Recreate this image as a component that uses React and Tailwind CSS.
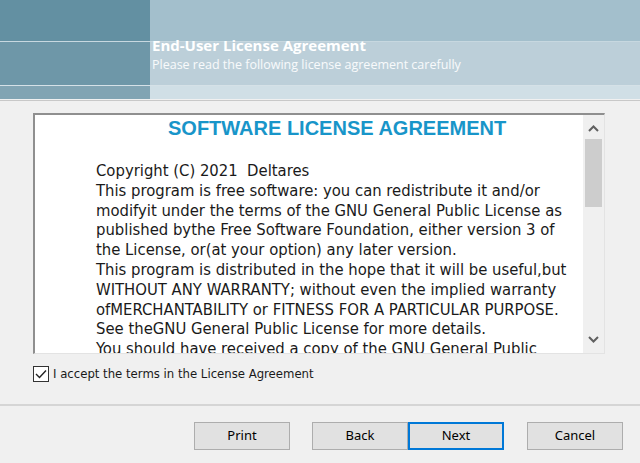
import React from 'react';

const licenseLines = [
  'Copyright (C) 2021  Deltares',
  'This program is free software: you can redistribute it and/or',
  'modifyit under the terms of the GNU General Public License as',
  'published bythe Free Software Foundation, either version 3 of',
  'the License, or(at your option) any later version.',
  'This program is distributed in the hope that it will be useful,but',
  'WITHOUT ANY WARRANTY; without even the implied warranty',
  'ofMERCHANTABILITY or FITNESS FOR A PARTICULAR PURPOSE.',
  'See theGNU General Public License for more details.',
  'You should have received a copy of the GNU General Public',
  'License along with this program.',
];

function Band({ left, right, height, line }) {
  return (
    <div className={`flex ${height} ${line}`}>
      <div className={`w-[150px] ${left}`} />
      <div className={`flex-1 ${right}`} />
    </div>
  );
}

function Button({ children, primary }) {
  return (
    <button
      className={`h-[28px] w-[96px] bg-[#e1e1e1] text-[13px] text-black border ${
        primary ? 'border-[#0078d7] border-2' : 'border-[#adadad]'
      }`}
    >
      {children}
    </button>
  );
}

export default function App() {
  return (
    <div className="w-[640px] h-[463px] bg-[#f0f0f0] flex flex-col overflow-hidden font-['Noto_Sans',sans-serif]">
      {/* banner */}
      <div className="relative h-[101px] border-b border-[#c8c8c8]">
        <Band left="bg-[#6390a2]" right="bg-[#a3bfcc]" height="h-[42px]" line="border-b border-[#b5cdd8]/70" />
        <Band left="bg-[#6e97a8]" right="bg-[#bccfd9]" height="h-[44px]" line="border-b border-[#c9dae2]/70" />
        <Band left="bg-[#81a4b3]" right="bg-[#d0dfe6]" height="h-[13px]" line="" />
        <div className="absolute left-[152px] top-[35px] text-white">
          <div className="text-[15px] font-bold leading-[21px] font-['Open_Sans',sans-serif]">End-User License Agreement</div>
          <div className="text-[12.5px] leading-[18px] text-white/90 font-['Open_Sans',sans-serif]">
            Please read the following license agreement carefully
          </div>
        </div>
      </div>

      {/* license box */}
      <div className="mt-[12px] ml-[33px] w-[572px] h-[241px] flex bg-white border-t-2 border-l-2 border-t-[#8f8f8f] border-l-[#8f8f8f] border-r border-b border-r-[#e3e3e3] border-b-[#e3e3e3]">
        <div className="flex-1 overflow-hidden">
          <div className="pt-[2px] pl-[133px] text-[20px] leading-[23px] font-bold text-[#1895c9] font-['Liberation_Sans',sans-serif]">
            SOFTWARE LICENSE AGREEMENT
          </div>
          <div className="mt-[21px] pl-[61px] text-[16.5px] leading-[19.8px] text-[#1a1a1a] whitespace-pre font-['DejaVu_Sans_Condensed','DejaVu_Sans',sans-serif]">
            {licenseLines.map((l) => (
              <div key={l}>{l}</div>
            ))}
          </div>
        </div>
        <div className="w-[21px] bg-[#f0f0f0] flex flex-col items-center">
          <svg width="17" height="20" viewBox="0 0 17 20" className="mt-[4px]">
            <path d="M4 12 L8.5 7.5 L13 12" fill="none" stroke="#606060" strokeWidth="2" />
          </svg>
          <div className="w-[17px] h-[68px] bg-[#cdcdcd]" />
          <div className="flex-1" />
          <svg width="17" height="20" viewBox="0 0 17 20" className="mb-[4px]">
            <path d="M4 8 L8.5 12.5 L13 8" fill="none" stroke="#606060" strokeWidth="2" />
          </svg>
        </div>
      </div>

      {/* accept */}
      <label className="mt-[11px] ml-[33px] flex items-center gap-[4px] text-[13px] leading-[18px] text-[#1a1a1a] font-['DejaVu_Sans_Condensed','DejaVu_Sans',sans-serif]">
        <span className="w-[16px] h-[16px] border border-[#333] bg-white flex items-center justify-center">
          <svg width="12" height="10" viewBox="0 0 12 10">
            <path d="M1 5 L4.5 8.5 L11 1.5" fill="none" stroke="#222" strokeWidth="1.4" />
          </svg>
        </span>
        <span>I accept the terms in the License Agreement</span>
      </label>

      {/* divider */}
      <div className="mt-[21px] border-t-2 border-[#d5d5d5]" />

      {/* buttons */}
      <div className="mt-[16px] flex pl-[194px]">
        <Button>Print</Button>
        <div className="ml-[22px] flex">
          <Button>Back</Button>
          <Button primary>Next</Button>
        </div>
        <div className="ml-[23px]">
          <Button>Cancel</Button>
        </div>
      </div>
    </div>
  );
}
